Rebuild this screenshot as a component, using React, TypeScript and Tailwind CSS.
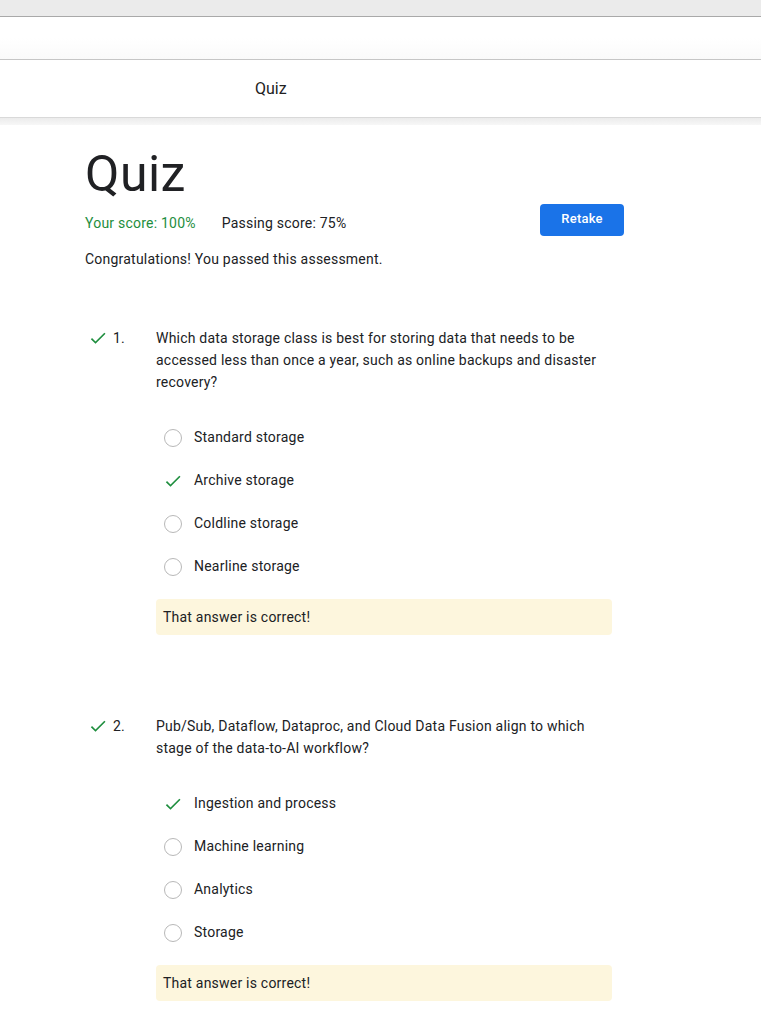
import React from "react";

type Question = {
  num: number;
  text: string;
  options: { label: string; correct?: boolean }[];
};

const questions: Question[] = [
  {
    num: 1,
    text: "Which data storage class is best for storing data that needs to be accessed less than once a year, such as online backups and disaster recovery?",
    options: [
      { label: "Standard storage" },
      { label: "Archive storage", correct: true },
      { label: "Coldline storage" },
      { label: "Nearline storage" },
    ],
  },
  {
    num: 2,
    text: "Pub/Sub, Dataflow, Dataproc, and Cloud Data Fusion align to which stage of the data-to-AI workflow?",
    options: [
      { label: "Ingestion and process", correct: true },
      { label: "Machine learning" },
      { label: "Analytics" },
      { label: "Storage" },
    ],
  },
];

const Check = () => (
  <svg width="20" height="20" viewBox="0 0 24 24" className="text-[#1e8e3e]">
    <path fill="currentColor" d="M9 16.17 4.83 12l-1.42 1.41L9 19 21 7l-1.41-1.41z" />
  </svg>
);

const Radio = () => (
  <div className="w-[18px] h-[18px] rounded-full border-[1.5px] border-[#b8b8b8] bg-white" />
);

const QuestionBlock = ({ q }: { q: Question }) => (
  <div className="flex">
    <div className="w-[71px] flex items-start h-[22px]">
      <div className="flex items-center h-[22px] pl-[3px]">
        <Check />
      </div>
      <span className="ml-[5px] leading-[22px]">{q.num}.</span>
    </div>
    <div className="w-[456px]">
      <p className="leading-[22px]">{q.text}</p>
      <div className="mt-[23px] pl-[7px]">
        {q.options.map((o) => (
          <div key={o.label} className="h-[43px] flex items-center">
            <div className="w-[20px] flex justify-center">
              {o.correct ? <Check /> : <Radio />}
            </div>
            <span className="ml-[11px]">{o.label}</span>
          </div>
        ))}
      </div>
      <div className="mt-[11px] h-[36px] flex items-center px-[7px] rounded bg-[#fdf6dd]">
        That answer is correct!
      </div>
    </div>
  </div>
);

const App: React.FC = () => {
  return (
    <div
      className="min-h-screen bg-white text-[#202124] text-[14px] tracking-[0.22px]"
      style={{ fontFamily: "Roboto, 'Liberation Sans', sans-serif" }}
    >
      <div className="h-[17px] bg-[#ebebeb] border-b border-[#a9a9a9]" />
      <div className="h-[43px] bg-gradient-to-b from-white via-white to-[#fafafa] border-b border-[#c6c6c6]" />
      <div className="h-[58px] flex items-center pl-[255px] text-[16px] tracking-normal text-[#222] border-b border-[#d9d9d9]">
        Quiz
      </div>
      <div className="h-[7px] bg-gradient-to-b from-[#ececec] to-[#f7f7f7]" />

      <main className="pl-[85px] w-[624px] pt-[20px]">
        <h1 className="text-[50px] leading-[59px] font-normal tracking-[0.5px] text-[#202124]">Quiz</h1>
        <div className="flex items-center justify-between h-[32px]">
          <div className="flex items-center pt-[7px]">
            <span className="text-[#1e8e3e]">Your score: 100%</span>
            <span className="ml-[26px]">Passing score: 75%</span>
          </div>
          <button className="w-[84px] h-[32px] rounded bg-[#1a73e8] text-white text-[13px] font-medium tracking-[0.2px] pb-[3px]">
            Retake
          </button>
        </div>
        <p className="mt-[13px] leading-[20px]">Congratulations! You passed this assessment.</p>

        <div className="mt-[58px]">
          <QuestionBlock q={questions[0]} />
        </div>
        <div className="mt-[80px]">
          <QuestionBlock q={questions[1]} />
        </div>
      </main>
    </div>
  );
};

export default App;
